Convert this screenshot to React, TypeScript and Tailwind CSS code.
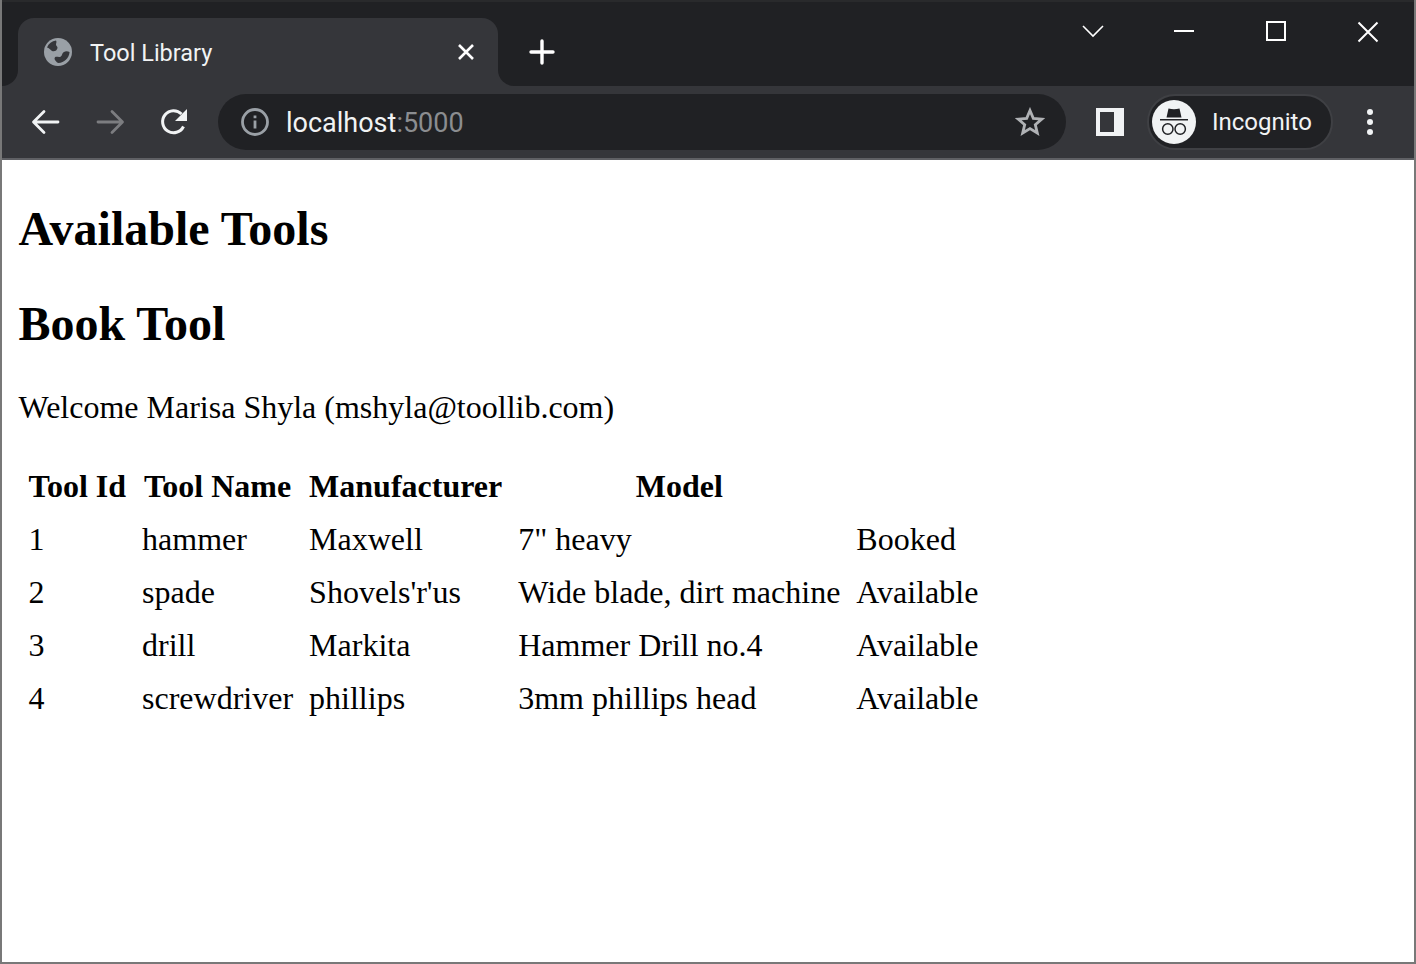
import React from "react";

const rows = [
  ["1", "hammer", "Maxwell", '7" heavy', "Booked"],
  ["2", "spade", "Shovels'r'us", "Wide blade, dirt machine", "Available"],
  ["3", "drill", "Markita", "Hammer Drill no.4", "Available"],
  ["4", "screwdriver", "phillips", "3mm phillips head", "Available"],
];

function Globe() {
  return (
    <svg width="28" height="28" viewBox="0 0 28 28" className="shrink-0">
      <circle cx="14" cy="14" r="14" fill="#9aa0a6" />
      <path d="M12 2.500c-4 .6-7.500 3-9 7 2 .5 3.500 2 5 3.500 2.500 1 5-.5 5.500-3 .3-1.500-1.500-2-1.500-3.500 0-1.500 1-2.500 0-4z" fill="#35363a" />
      <path d="M25.500 14c-2-.8-4-1-6 .3-2 1.500-1 3.500-3 4.500-2 .8-4-.6-5.500.5-1 1-.3 3 1 4 .8 1 1.500 1.500 2.500 1.700 5.500-.2 10.500-5 11-10.500z" fill="#35363a" />
    </svg>
  );
}

function Flare({ side }: { side: "left" | "right" }) {
  return (
    <div className={side === "left" ? "absolute right-full bottom-0 h-4 w-4 bg-[#35363a]" : "absolute left-full bottom-0 h-4 w-4 bg-[#35363a]"}>
      <div className={side === "left" ? "h-full w-full rounded-br-2xl bg-[#202124]" : "h-full w-full rounded-bl-2xl bg-[#202124]"} />
    </div>
  );
}

export default function App() {
  return (
    <div className="flex h-[964px] w-[1416px] flex-col overflow-hidden border-x-2 border-b-2 border-[#787878] bg-white font-['Liberation_Serif',serif] text-black">
      <div className="flex h-[86px] shrink-0 items-end border-t-2 border-[#292a2c] bg-[#202124] pl-4 font-['Roboto',sans-serif]">
        <div className="relative flex h-[68px] w-[480px] items-center rounded-t-2xl bg-[#35363a] pl-[26px] pr-[23px]">
          <Flare side="left" />
          <Flare side="right" />
          <Globe />
          <span className="ml-[18px] flex-1 pt-1 text-[23.5px] leading-none text-[#f1f3f4]">Tool Library</span>
          <svg width="18" height="18" viewBox="0 0 18 18" fill="none" stroke="#fff" strokeWidth="2.600">
            <path d="M2 2l14 14M16 2L2 16" />
          </svg>
        </div>
        <svg className="ml-[31px] mb-[21px]" width="26" height="26" viewBox="0 0 26 26" fill="none" stroke="#fff" strokeWidth="3.400" strokeLinecap="round">
          <path d="M13 2v22M2 13h22" />
        </svg>
        <div className="ml-auto flex h-full items-start">
          <svg className="mt-[22px] mr-[69px]" width="22" height="14" viewBox="0 0 22 14" fill="none" stroke="#fff" strokeWidth="1.600">
            <path d="M1 2l10 10L21 2" />
          </svg>
          <svg className="mt-[19px] mr-[71px]" width="22" height="20" viewBox="0 0 22 20" fill="none" stroke="#fff" strokeWidth="2">
            <path d="M1 10h20" />
          </svg>
          <svg className="mt-[19px] mr-[71px]" width="20" height="20" viewBox="0 0 20 20" fill="none" stroke="#fff" strokeWidth="2">
            <rect x="1" y="1" width="18" height="18" />
          </svg>
          <svg className="mt-[19px] mr-[35px]" width="22" height="22" viewBox="0 0 22 22" fill="none" stroke="#fff" strokeWidth="2">
            <path d="M1.500 1.500l19 19M20.500 1.500l-19 19" />
          </svg>
        </div>
      </div>

      <div className="flex h-[72px] shrink-0 items-center bg-[#35363a] font-['Roboto',sans-serif]">
        <svg className="ml-[28px]" width="32" height="28" viewBox="0 0 32 28" fill="none" stroke="#f1f3f4" strokeWidth="2.800" strokeLinecap="round" strokeLinejoin="round">
          <path d="M28 14H4M14 3.500L3.500 14 14 24.500" />
        </svg>
        <svg className="ml-[32px]" width="32" height="28" viewBox="0 0 32 28" fill="none" stroke="#7c7d80" strokeWidth="2.800" strokeLinecap="round" strokeLinejoin="round">
          <path d="M4 14h24M18 3.500L28.500 14 18 24.500" />
        </svg>
        <svg className="ml-[34px]" width="28" height="28" viewBox="0 0 28 28" fill="none">
          <path d="M23.500 18.500A11 11 0 1 1 21.500 6" stroke="#f1f3f4" strokeWidth="3" />
          <path d="M27 1v12H15z" fill="#f1f3f4" />
        </svg>
        <div className="ml-[30px] flex h-14 w-[848px] items-center rounded-full bg-[#202124] pl-[22px] pr-[21px]">
          <svg width="30" height="30" viewBox="0 0 30 30" fill="none">
            <circle cx="15" cy="15" r="12.500" stroke="#9aa0a6" strokeWidth="2.800" />
            <path d="M13.600 13.500h2.800v8h-2.800zM13.600 8.500h2.800v2.800h-2.800z" fill="#9aa0a6" />
          </svg>
          <span className="ml-[16px] flex-1 pt-[2px] text-[27px] leading-none text-[#f1f3f4]">
            localhost<span className="text-[#8b8d90]">:5000</span>
          </span>
          <svg width="30" height="30" viewBox="0 0 30 30" fill="none" stroke="#b0b2b5" strokeWidth="2.800" strokeLinejoin="miter">
            <path d="M15 3.500l3.300 7.900 8.500.7-6.500 5.600 2 8.300-7.300-4.400-7.300 4.400 2-8.300-6.500-5.600 8.500-.7z" />
          </svg>
        </div>
        <div className="ml-[30px] flex h-7 w-7 items-stretch bg-[#f1f3f4] p-1 pr-0">
          <div className="w-[14px] bg-[#35363a]" />
        </div>
        <div className="ml-[23px] flex h-[56px] w-[186px] items-center rounded-full border-2 border-[#3f4044] bg-[#202124] pl-[3px]">
          <div className="flex h-11 w-11 shrink-0 items-center justify-center rounded-full bg-[#f1f3f4]">
            <svg width="30" height="30" viewBox="0 0 30 30" fill="#202124">
              <path d="M9.500 1.500Q15 3 20.500 1.500L22.500 10.500H7.500z" />
              <path d="M1 12h28v1.500H1z" />
              <circle cx="8.800" cy="22" r="5.200" fill="none" stroke="#202124" strokeWidth="1.500" />
              <circle cx="21.200" cy="22" r="5.200" fill="none" stroke="#202124" strokeWidth="1.500" />
            </svg>
          </div>
          <span className="ml-[16px] text-[24px] leading-none text-[#f1f3f4]">Incognito</span>
        </div>
        <div className="ml-[34px] flex flex-col gap-[4px]">
          <span className="h-[6px] w-[6px] rounded-full bg-[#f1f3f4]" />
          <span className="h-[6px] w-[6px] rounded-full bg-[#f1f3f4]" />
          <span className="h-[6px] w-[6px] rounded-full bg-[#f1f3f4]" />
        </div>
      </div>
      <div className="h-[2px] shrink-0 bg-[#5f6064]" />

      <main className="pl-[16.500px] pt-[41px]">
        <h1 className="mb-[40px] text-[48px] font-bold leading-[55px]">Available Tools</h1>
        <h2 className="mb-[38px] text-[48px] font-bold leading-[55px]">Book Tool</h2>
        <p className="mb-[32px] text-[32px] leading-[37px]">Welcome Marisa Shyla (mshyla@toollib.com)</p>
        <table className="border-separate [border-spacing:4px] text-[32px] leading-[37px]">
          <thead>
            <tr>
              {["Tool Id", "Tool Name", "Manufacturer", "Model", ""].map((h, i) => (
                <th key={i} className="p-[6px] text-center font-bold">{h}</th>
              ))}
            </tr>
          </thead>
          <tbody>
            {rows.map((r) => (
              <tr key={r[0]}>
                {r.map((c, i) => (
                  <td key={i} className="p-[6px]">{c}</td>
                ))}
              </tr>
            ))}
          </tbody>
        </table>
      </main>
    </div>
  );
}
